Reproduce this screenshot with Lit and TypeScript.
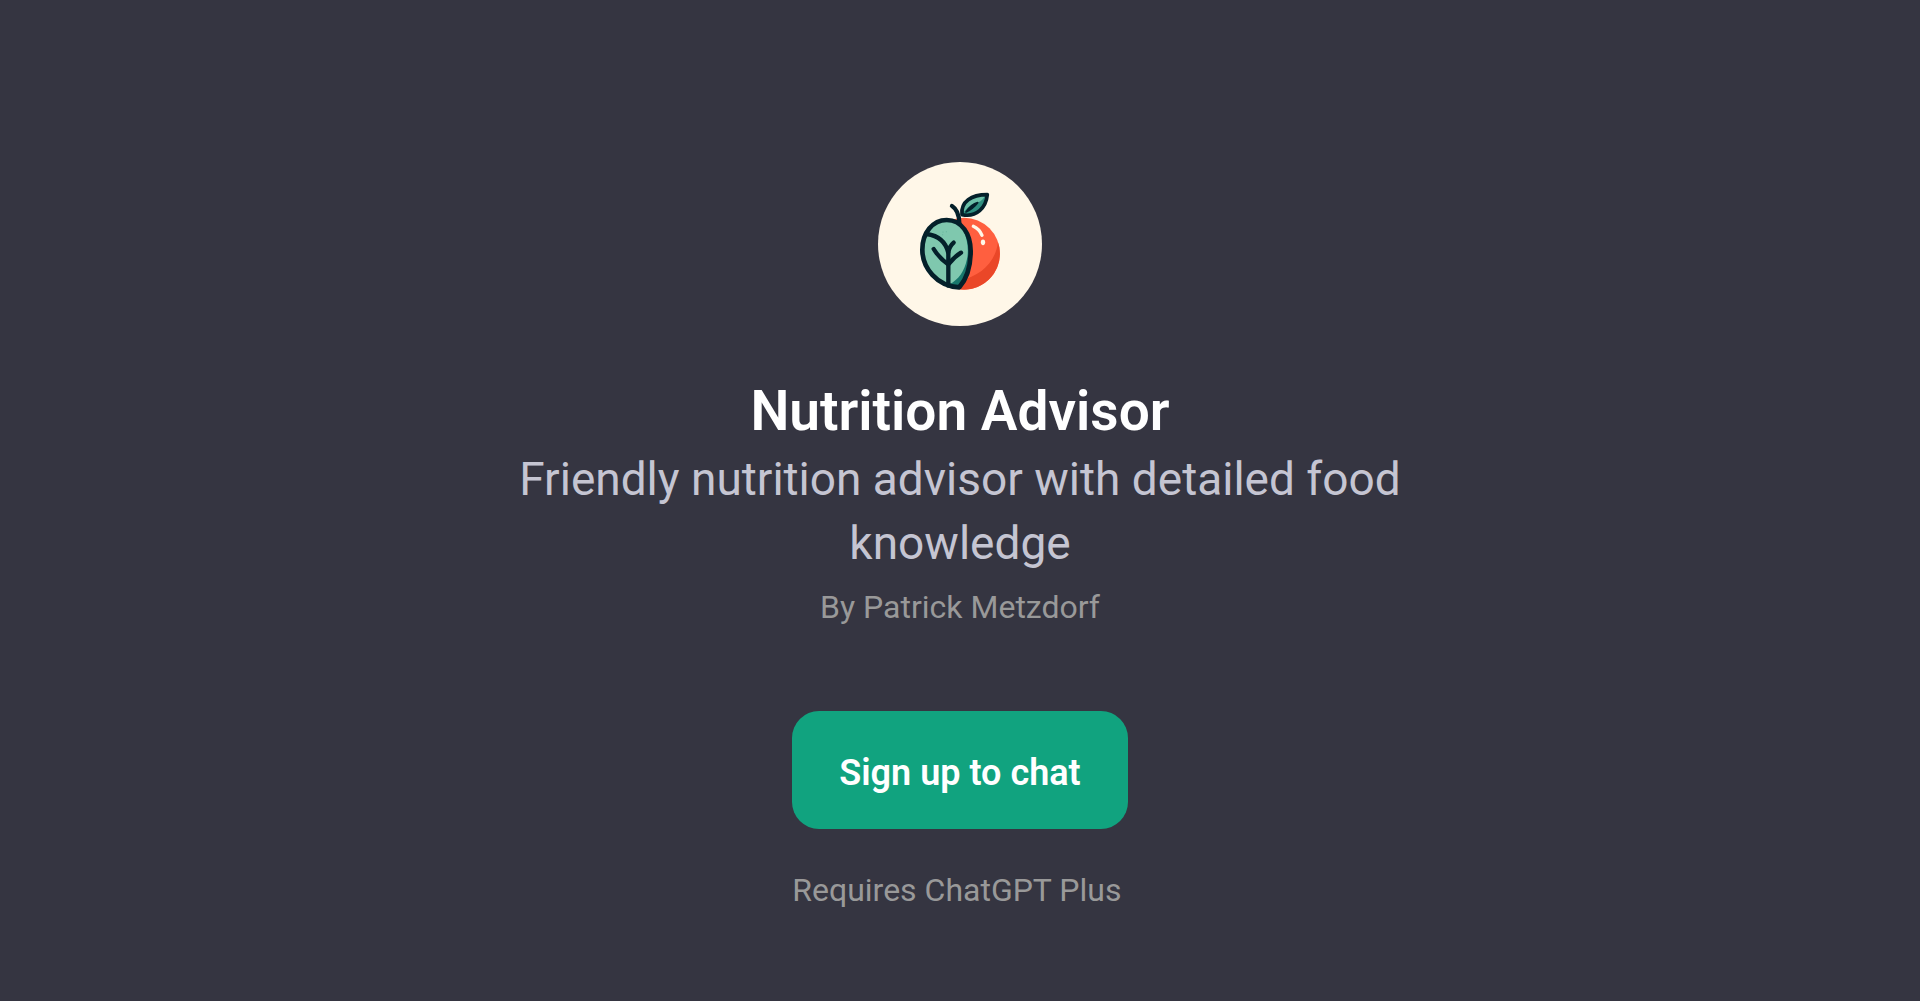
import { LitElement, html, css } from 'lit';
import { customElement, property } from 'lit/decorators.js';

@customElement('advisor-logo')
class AdvisorLogo extends LitElement {
  static styles = css`
    :host {
      display: block;
      width: 164px;
      height: 164px;
    }
    .art {
      display: block;
      width: 100%;
      height: 100%;
    }
  `;

  render() {
    return html`
      <svg class="art" viewBox="24 21 492 492" role="img" aria-label="Nutrition Advisor logo" stroke-linecap="round" stroke-linejoin="round">
        <circle cx="270" cy="267" r="246" fill="#fff7e8" />
        <!-- fruit half and its shade -->
        <circle cx="282" cy="296" r="108" fill="#ff5f3f" />
        <path d="M384 262 C376 322 334 362 268 377 L268 403 A108 108 0 0 0 384 262Z" fill="#ea4728" />
        <path d="M310 214 Q328 222 336 241" fill="none" stroke="#fff7e8" stroke-width="10" />
        <ellipse cx="339" cy="262" rx="6.5" ry="8.5" fill="#fff7e8" />
        <!-- leaf half -->
        <path d="M230 195 C276 195 302 238 302 288 C302 334 288 374 268 397 C200 394 157 338 157 284 C157 234 188 195 230 195Z" fill="#7fc8ae" />
        <path d="M281 226 C294 262 296 288 291 312 C284 348 266 374 238 388 L268 397 C288 374 302 334 302 288 C302 262 294 240 281 226Z" fill="#17776c" />
        <path d="M230 195 C276 195 302 238 302 288 C302 334 288 374 268 397 C200 394 157 338 157 284 C157 234 188 195 230 195Z" fill="none" stroke="#04202a" stroke-width="14" />
        <g fill="none" stroke="#04202a" stroke-width="13">
          <path d="M170 237 C204 242 228 262 235 294 V392" />
          <path d="M251 263 Q238 274 235 292" />
          <path d="M191 282 Q208 310 235 328 Q252 306 273 293" />
        </g>
        <g fill="#5aae96">
          <circle cx="219" cy="231" r="1.5" />
          <circle cx="229" cy="230" r="1.5" />
          <circle cx="218" cy="239" r="1.5" />
        </g>
        <!-- stem and top leaf -->
        <path d="M246 153 Q267 166 268 204" fill="none" stroke="#04202a" stroke-width="13" />
        <path d="M276 179 C272 140 304 119 352 119 C348 158 320 188 276 179Z" fill="#2f8f80" />
        <path d="M279 174 C276 144 302 124 346 122 C340 132 334 137 325 142 C304 146 292 158 279 174Z" fill="#6cc0a8" />
        <path d="M288 171 Q310 160 323 143 Q304 148 288 171Z" fill="#04202a" stroke="#04202a" stroke-width="5" />
        <path d="M276 179 C272 140 304 119 352 119 C348 158 320 188 276 179Z" fill="none" stroke="#04202a" stroke-width="11" />
      </svg>
    `;
  }
}

@customElement('app-root')
class AppRoot extends LitElement {
  @property() name = 'Nutrition Advisor';
  @property() description = 'Friendly nutrition advisor with detailed food knowledge';
  @property() author = 'Patrick Metzdorf';

  static styles = css`
    :host {
      display: block;
      min-height: 100vh;
      box-sizing: border-box;
      background: #353541;
      color: #fff;
      font-family: Roboto, "Liberation Sans", sans-serif;
    }
    .page {
      display: flex;
      flex-direction: column;
      align-items: center;
      padding: 162px 32px 64px;
    }
    .about {
      display: flex;
      flex-direction: column;
      align-items: center;
      margin-top: 53px;
      max-width: 912px;
      text-align: center;
    }
    .title,
    .description,
    .author,
    .note {
      margin: 0;
      font-weight: 400;
    }
    .title {
      font-size: 55px;
      line-height: 64px;
      font-weight: 600;
    }
    .description {
      margin-top: 4px;
      font-size: 46px;
      line-height: 64px;
      color: #c5c5d2;
    }
    .author,
    .note {
      font-size: 32px;
      line-height: 40px;
      color: #999;
    }
    .author {
      margin-top: 12px;
    }
    .actions {
      display: flex;
      flex-direction: column;
      align-items: flex-start;
      gap: 41px;
      margin-top: 84px;
    }
    .signup {
      border: 0;
      border-radius: 27px;
      padding: 39px 47px 33px;
      background: #11a37f;
      color: #fff;
      font-family: inherit;
      font-size: 36px;
      line-height: 46px;
      font-weight: 600;
      cursor: pointer;
    }
  `;

  render() {
    return html`
      <main class="page">
        <advisor-logo></advisor-logo>
        <section class="about">
          <h1 class="title">${this.name}</h1>
          <p class="description">${this.description}</p>
          <p class="author">By ${this.author}</p>
        </section>
        <div class="actions">
          <button class="signup" type="button">Sign up to chat</button>
          <p class="note">Requires ChatGPT Plus</p>
        </div>
      </main>
    `;
  }
}
